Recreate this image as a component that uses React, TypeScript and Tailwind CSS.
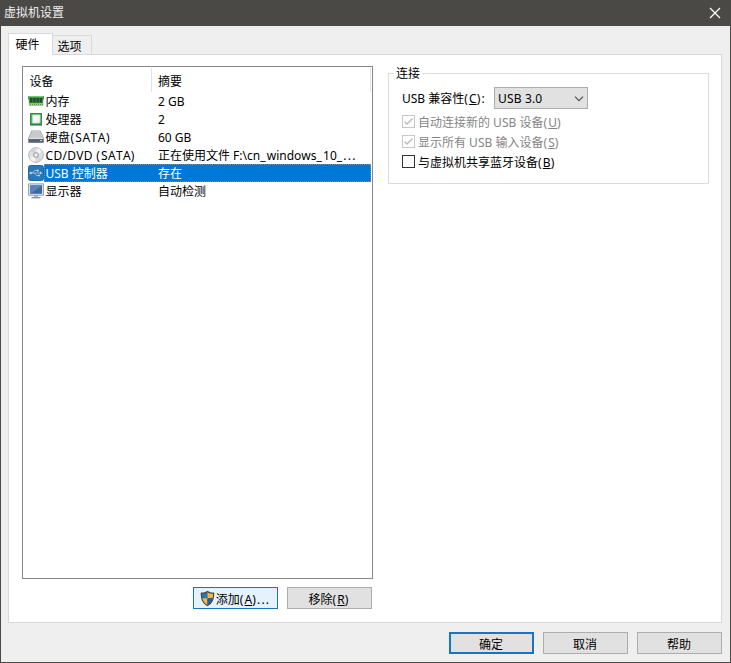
import React from 'react';

const MemoryIcon = () => (
  <svg width="16" height="16" viewBox="0 0 16 16">
    <path d="M0 3h16v3l-.8 1v5.500H.8V7L0 6z" fill="#3f9a4c" />
    <path d="M.5 3.500h15" stroke="#77c67c" />
    <path d="M2 5h2.500v4.500H2zM5.200 5h2.500v4.500H5.200zM8.400 5h2.500v4.500H8.400zM11.600 5h2.500v4.500h-2.500z" fill="#234c2b" />
    <path d="M1 10.500h14" stroke="#8fc65c" />
    <path d="M1 11.500h14" stroke="#c9cf73" strokeDasharray="1 1" />
  </svg>
);

const CpuIcon = () => (
  <svg width="16" height="16" viewBox="0 0 16 16">
    <path d="M2 2h12v12H2z" fill="#2f8f4a" />
    <path d="M3 3h10v10H3z" fill="#55ac67" />
    <path d="M4.500 4h7.500v7L11 12H4.500z" fill="#f4f7f3" stroke="#b9d9bb" strokeWidth=".7" />
    <path d="M2 14h12" stroke="#266b39" />
  </svg>
);

const DiskIcon = () => (
  <svg width="16" height="16" viewBox="0 0 16 16">
    <path d="M3.500 1.500h9L15.800 9v5H.2V9z" fill="#a0a6ae" />
    <path d="M4 2h8l2.800 7H1.200z" fill="#c7cbd0" />
    <path d="M.5 9.500h15v4H.5z" fill="#586470" />
    <path d="M1 9.500h14" stroke="#e0e4e8" />
    <path d="M12 11.500h2" stroke="#b5e1ee" />
  </svg>
);

const DiscIcon = () => (
  <svg width="16" height="16" viewBox="0 0 16 16">
    <circle cx="8" cy="8" r="7.400" fill="#dfe2e5" stroke="#a2a7ad" strokeWidth=".8" />
    <path d="M8 8 2 3.500A7 7 0 0 1 6 1zM8 8l6 4.500A7 7 0 0 1 10 15z" fill="#d0d3d7" />
    <path d="M8 8 9.500 1a7 7 0 0 1 4.500 3.500zM8 8 6.500 15A7 7 0 0 1 2 11.500z" fill="#f4f4f4" />
    <circle cx="8" cy="8" r="2.500" fill="#d1d4d8" stroke="#8d9298" strokeWidth=".7" />
    <circle cx="8" cy="8" r="1" fill="white" />
  </svg>
);

const UsbIcon = () => (
  <svg width="16" height="16" viewBox="0 0 16 16">
    <rect x=".5" y=".5" width="15" height="15" rx="2" fill="#2878b8" stroke="#2468a5" />
    <path d="M2.500 8h10M4.500 8 6.500 5.500h3M6.500 8l2 2.500h2" fill="none" stroke="#a4d0ee" strokeWidth=".8" />
    <circle cx="2.700" cy="8" r="1.200" fill="#b4ddf6" />
    <path d="m12 6.500 2.300 1.500L12 9.500zM9 4.700h1.700v1.700H9z" fill="#b4ddf6" />
    <circle cx="11" cy="10.500" r="1" fill="#b4ddf6" />
  </svg>
);

const DisplayIcon = () => (
  <svg width="16" height="16" viewBox="0 0 16 16">
    <path d="M.5 .8h15v11.500H.5z" fill="#dce2e9" stroke="#8490a0" strokeWidth=".8" />
    <path d="M2 2.300h12v8.500H2z" fill="#3c699f" />
    <path d="M2 2.300h12L3 10.800H2z" fill="#5885b9" />
    <path d="M6 12.300h4v1.500H6z" fill="#9aa3af" />
    <path d="M3.500 14.700h9" stroke="#88929f" strokeWidth="1.400" />
  </svg>
);

const ShieldIcon = () => (
  <svg className="-mt-[3px]" width="15" height="17" viewBox="0 0 15 17">
    <path d="M7.500.7C5.500 2.200 3.400 2.600.8 2.500c-.3 6 1.200 11 6.700 13.700 5.500-2.700 7-7.700 6.700-13.700-2.600.1-4.700-.3-6.700-1.800z" fill="#4b4a45" />
    <path d="M7.500 2.200C6 3.200 4.200 3.700 2 3.700c0 1.600 0 3 .4 4.500h5.100z" fill="#2a76bd" />
    <path d="M7.500 2.200C9 3.200 10.800 3.700 13 3.700c0 1.600 0 3-.4 4.500H7.500z" fill="#f5b942" />
    <path d="M2.400 8.200h5.100V15C4.700 13.500 3 11.200 2.400 8.200z" fill="#f5b942" />
    <path d="M12.600 8.200H7.500V15c2.800-1.500 4.500-3.800 5.100-6.800z" fill="#1763aa" />
  </svg>
);

// Punctuation is set slightly wider than the surrounding letters.
const Label = ({ children }: { children: string }) => (
  <>
    {children.split(/([()_.]+)/).map((part, i) =>
      i % 2 ? <span key={i} className="tracking-[1.2px]">{part}</span> : part,
    )}
  </>
);

const devices = [
  { icon: <MemoryIcon />, name: '内存', summary: '2 GB' },
  { icon: <CpuIcon />, name: '处理器', summary: '2' },
  { icon: <DiskIcon />, name: '硬盘(SATA)', summary: '60 GB', spacing: 'tracking-[0.5px]' },
  { icon: <DiscIcon />, name: 'CD/DVD (SATA)', summary: '正在使用文件 F:\\cn_windows_10_...', spacing: 'tracking-[0.3px]' },
  { icon: <UsbIcon />, name: 'USB 控制器', summary: '存在', selected: true },
  { icon: <DisplayIcon />, name: '显示器', summary: '自动检测' },
];

const Key = ({ children }: { children: string }) => (
  <><Label>(</Label><span className="underline underline-offset-1">{children}</span><Label>)</Label></>
);

const Check = ({ label, hotkey, checked = false }: { label: string; hotkey: string; checked?: boolean }) => (
  <div className={`flex h-5 items-start ${checked ? 'text-[#858585]' : 'text-black'}`}>
    <div className={`mt-[3px] mr-[3px] size-[13px] shrink-0 border bg-white ${checked ? 'border-[#c8c8c8]' : 'border-[#333]'}`}>
      {checked && (
        <svg width="11" height="11" viewBox="0 0 11 11">
          <path d="m1.500 5.500 2.500 2.500 5.500-5.500" fill="none" stroke="#b8b8b8" strokeWidth="1.300" />
        </svg>
      )}
    </div>
    <span className="pt-[2px]">{label}<Key>{hotkey}</Key></span>
  </div>
);

const Button = ({ children, className = 'border border-[#adadad] bg-[#e1e1e1]' }: { children: React.ReactNode; className?: string }) => (
  <button className={`flex h-[22px] w-[85px] items-center justify-center pt-[3px] pr-px ${className}`}>{children}</button>
);

export default function App() {
  return (
    <div className="flex h-[663px] w-[731px] flex-col overflow-hidden border border-t-0 border-[#4a4946] bg-[#efefef] font-['Noto_Sans','Noto_Sans_CJK_SC',sans-serif] text-[12px] leading-[18px] whitespace-nowrap text-black [font-kerning:none]">
      <header className="flex h-[26px] shrink-0 items-center justify-between bg-[#4a4946] pr-[9px] pl-[3px] text-[#f0f0f0]">
        <span>虚拟机设置</span>
        <svg width="12" height="12" viewBox="0 0 12 12">
          <path d="m1 1 10 10M11 1 1 11" stroke="white" strokeWidth="1.300" />
        </svg>
      </header>

      <nav className="mt-[7px] ml-[7px] flex h-[21px] shrink-0 items-end">
        <div className="z-10 -mb-px h-[22px] w-[45px] border border-b-0 border-[#d9d9d9] bg-white pt-[2px] pl-[6.5px]">硬件</div>
        <div className="h-[19px] w-[39px] border border-b-0 border-l-0 border-[#d9d9d9] pt-[2px] pl-[4.5px]">选项</div>
      </nav>

      <main className="mx-[7px] mr-2 flex h-[569px] shrink-0 items-start border border-[#d9d9d9] bg-white pt-[11px] pl-[13px]">
        <section className="w-[351px]">
          <div className="h-[513px] border border-[#828790]">
            <div className="flex h-[25px] pt-px">
              <div className="w-[129px] border-r border-[#e2e2e2] pt-[5px] pl-[6.5px]">设备</div>
              <div className="w-[219px] border-r border-[#e2e2e2] pt-[5px] pl-[6px]">摘要</div>
            </div>
            {devices.map((d) => (
              <div key={d.name} className="flex h-[18px] items-center pr-px pl-[5px]">
                <span className="w-4 shrink-0">{d.icon}</span>
                <div className={`flex h-[18px] flex-1 items-center pt-[2px] ${d.selected ? 'bg-[#0078d7] text-white outline-1 -outline-offset-1 outline-dotted outline-[#a88358]' : ''}`}>
                  <span className={`w-[114px] pl-[1.5px] ${d.spacing ?? ''}`}><Label>{d.name}</Label></span>
                  <span><Label>{d.summary}</Label></span>
                </div>
              </div>
            ))}
          </div>
          <div className="mt-2 flex justify-end gap-[9px] pr-px">
            <Button className="border border-[#1874b8] bg-[#e5f1fb]">
              <ShieldIcon /><span className="ml-px">添加<Key>A</Key><Label>...</Label></span>
            </Button>
            <Button>移除<Key>R</Key></Button>
          </div>
        </section>

        <fieldset className="mt-[-2px] ml-[15px] h-[120px] w-[321px] border border-[#dcdcdc] pl-[13px]">
          <legend className="-ml-[8px] px-[2px] pt-px">连接</legend>
          <div className="mt-[4px] flex h-[22px] items-center">
            <span className="w-[92px] pt-px">USB 兼容性<Key>C</Key>:</span>
            <div className="flex h-[22px] w-[94px] items-center justify-between border border-[#adadad] bg-[#e1e1e1] pt-[2px] pr-[3px] pl-[3px]">
              <span className="tracking-[0.15px]">USB 3.0</span>
              <svg width="10" height="6" viewBox="0 0 10 6">
                <path d="m1 .7 4 4 4-4" fill="none" stroke="#505050" strokeWidth="1.200" />
              </svg>
            </div>
          </div>
          <div className="mt-[3px]">
            <Check label="自动连接新的 USB 设备" hotkey="U" checked />
            <Check label="显示所有 USB 输入设备" hotkey="S" checked />
            <Check label="与虚拟机共享蓝牙设备" hotkey="B" />
          </div>
        </fieldset>
      </main>

      <footer className="mt-[9px] mr-2 flex justify-end gap-[9px]">
        <Button className="border-2 border-[#1874c8] bg-[#e1e1e1]">确定</Button>
        <Button>取消</Button>
        <Button>帮助</Button>
      </footer>
    </div>
  );
}
